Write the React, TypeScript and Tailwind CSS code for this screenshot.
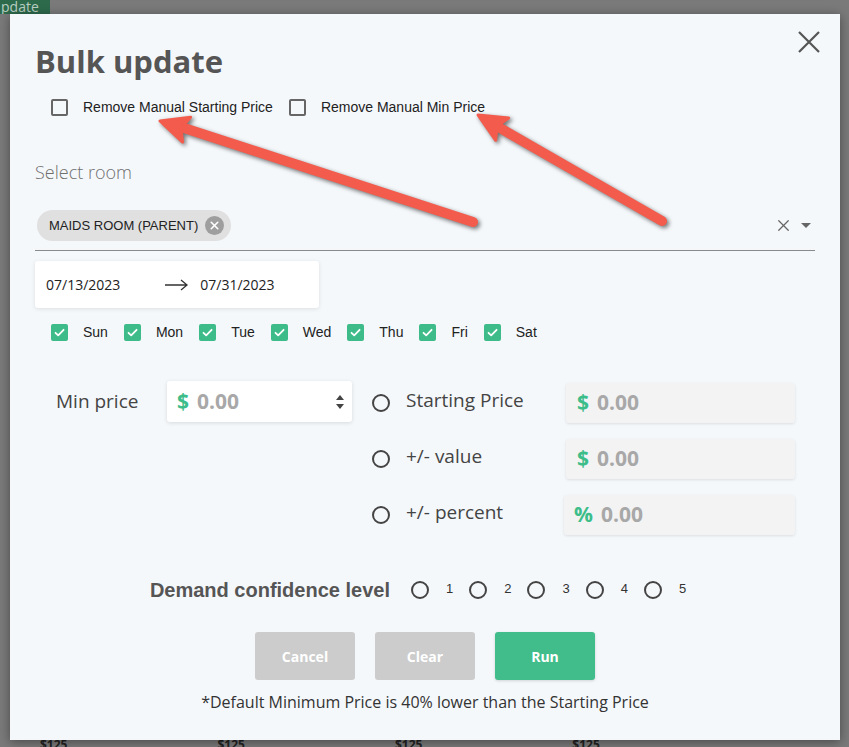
import { X } from "lucide-react";

const days = ["Sun", "Mon", "Tue", "Wed", "Thu", "Fri", "Sat"];

const priceRows = [
  { label: "Starting Price", sign: "$" },
  { label: "+/- value", sign: "$" },
  { label: "+/- percent", sign: "%" },
];

const Radio = () => (
  <span className="inline-block w-[18px] h-[18px] rounded-full border-2 border-[#444] shrink-0" />
);

const GreenCheck = () => (
  <span className="flex items-center justify-center w-[17px] h-[17px] rounded-[2px] bg-[#3dbb89] shrink-0">
    <svg width="13" height="13" viewBox="0 0 13 13" fill="none">
      <path d="M2.5 6.8 L5.2 9.4 L10.6 3.8" stroke="#fff" strokeWidth="1.8" strokeLinecap="round" strokeLinejoin="round" />
    </svg>
  </span>
);

const Arrows = () => (
  <svg
    className="absolute inset-0 pointer-events-none drop-shadow-[2px_2px_2px_rgba(0,0,0,0.55)]"
    width="849"
    height="747"
    viewBox="0 0 849 747"
  >
    <line x1="473" y1="222" x2="184" y2="128" stroke="#f35b4c" strokeWidth="10" strokeLinecap="round" />
    <polygon points="160,121 190.6,117.3 181,127.9 182.6,142.1" fill="#f35b4c" stroke="#f35b4c" strokeWidth="3" strokeLinejoin="round" />
    <line x1="662" y1="221" x2="500" y2="128" stroke="#f35b4c" strokeWidth="10" strokeLinecap="round" />
    <polygon points="478,115 508.7,117.9 497,126.1 495.7,140.3" fill="#f35b4c" stroke="#f35b4c" strokeWidth="3" strokeLinejoin="round" />
  </svg>
);

const App = () => {
  return (
    <div className="relative w-[849px] h-[747px] overflow-hidden bg-[#7a7a7a] font-['Open_Sans',sans-serif]">
      {/* page behind the overlay */}
      <div className="flex flex-col h-full">
        <div className="flex h-[14px]">
          <div className="w-[50px] bg-[#2d6a4c] text-[#b9cfc2] text-[14px] leading-[14px] pl-[1px] overflow-hidden">pdate</div>
        </div>
        <div className="flex-1" />
        <div className="flex gap-[150px] pl-[40px] h-[8px] text-[#222] text-[12px] leading-[12px] font-bold">
          <span>$125</span>
          <span>$125</span>
          <span>$125</span>
          <span>$125</span>
        </div>
      </div>

      {/* modal */}
      <div className="absolute left-[10px] top-[14px] w-[830px] h-[726px] bg-[#f5f8fb] shadow-[0_2px_10px_rgba(0,0,0,0.4)] px-[25px] pt-[27px]">
        <button className="absolute right-[19px] top-[16px] w-[24px] h-[24px] flex items-center justify-center">
          <svg width="24" height="24" viewBox="0 0 24 24" fill="none">
            <path d="M2 2 L22 22 M22 2 L2 22" stroke="#555" strokeWidth="2.2" />
          </svg>
        </button>

        <h2 className="text-[31px] leading-[40px] font-bold text-[#555]">Bulk update</h2>

        <div className="flex items-center h-[20px] mt-[16px] pl-[16px] font-['Liberation_Sans',Arial,sans-serif] text-[14px] text-[#222]">
          <span className="w-[17px] h-[17px] rounded-[2px] border-2 border-[#666]" />
          <span className="ml-[15px]">Remove Manual Starting Price</span>
          <span className="ml-[16px] w-[17px] h-[17px] rounded-[2px] border-2 border-[#666]" />
          <span className="ml-[15px]">Remove Manual Min Price</span>
        </div>

        <div className="mt-[43px] text-[18px] leading-[24px] font-light text-[#6f6f6f]">Select room</div>

        <div className="flex items-center mt-[26px] pl-[2px] pb-[9px] border-b border-[#8a8a8a]">
          <div className="flex items-center h-[31px] rounded-full bg-[#e0e0e0] pl-[12px] pr-[7px] font-['Liberation_Sans',Arial,sans-serif] text-[13px] text-[#222]">
            MAIDS ROOM (PARENT)
            <span className="ml-[7px] flex items-center justify-center w-[19px] h-[19px] rounded-full bg-[#9e9e9e]">
              <X size={13} strokeWidth={3} color="#fff" />
            </span>
          </div>
          <div className="flex-1" />
          <X size={19} strokeWidth={1.6} color="#666" />
          <svg className="ml-[8px] mr-[4px]" width="10" height="6" viewBox="0 0 10 6">
            <path d="M0 0 L10 0 L5 5 Z" fill="#666" />
          </svg>
        </div>

        <div className="flex items-center w-[284px] h-[47px] mt-[10px] bg-white rounded-[3px] shadow-[0_1px_4px_rgba(0,0,0,0.1)] pl-[11px] text-[14px] text-[#222]">
          <span>07/13/2023</span>
          <svg className="ml-[45px]" width="24" height="12" viewBox="0 0 24 12" fill="none">
            <path d="M0 6 H22 M16 1 L22 6 L16 11" stroke="#333" strokeWidth="1.3" />
          </svg>
          <span className="ml-[11px]">07/31/2023</span>
        </div>

        <div className="flex items-center mt-[14px] pl-[16px] font-['Liberation_Sans',Arial,sans-serif] text-[14px] text-[#222]">
          {days.map((d) => (
            <div key={d} className="flex items-center mr-[16px]">
              <GreenCheck />
              <span className="ml-[15px]">{d}</span>
            </div>
          ))}
        </div>

        <div className="flex mt-[38px] pl-[21px]">
          <div className="w-[111px] h-[41px] flex items-center text-[19px] text-[#444]">Min price</div>
          <div className="flex items-center w-[185px] h-[41px] bg-white rounded-[3px] shadow-[0_1px_4px_rgba(0,0,0,0.12)] pl-[10px] pr-[8px] text-[21px] font-bold">
            <span className="text-[#3cbd8a]">$</span>
            <span className="ml-[8px] text-[#a8a8a8]">0.00</span>
            <div className="flex-1" />
            <svg width="8" height="14" viewBox="0 0 8 14">
              <path d="M0 5 L4 0 L8 5 Z M0 9 L4 14 L8 9 Z" fill="#444" />
            </svg>
          </div>
          <div className="flex flex-col gap-[16px] ml-[20px] mt-[2px]">
            {priceRows.map((r, i) => (
              <div key={r.label} className="flex items-center">
                <Radio />
                <span
                  className={
                    i === 2
                      ? "ml-[16px] w-[158px] text-[19px] text-[#444] -mt-[6px]"
                      : "ml-[16px] w-[160px] text-[19px] text-[#444] -mt-[6px]"
                  }
                >
                  {r.label}
                </span>
                <div
                  className={
                    i === 2
                      ? "flex items-center w-[231px] h-[40px] bg-[#f3f3f3] rounded-[3px] shadow-[0_1px_3px_rgba(0,0,0,0.1)] pl-[10px] text-[21px] font-bold"
                      : "flex items-center w-[229px] h-[40px] bg-[#f3f3f3] rounded-[3px] shadow-[0_1px_3px_rgba(0,0,0,0.1)] pl-[11px] text-[21px] font-bold"
                  }
                >
                  <span className="text-[#3cbd8a]">{r.sign}</span>
                  <span className="ml-[8px] text-[#a8a8a8]">0.00</span>
                </div>
              </div>
            ))}
          </div>
        </div>

        <div className="flex items-center justify-center mt-[43px] h-[24px] pr-[14px] font-['Liberation_Sans',Arial,sans-serif]">
          <span className="text-[20px] font-bold text-[#555]">Demand confidence level</span>
          {[1, 2, 3, 4, 5].map((n, i) => (
            <div key={n} className={i === 0 ? "flex items-center ml-[21px]" : "flex items-center ml-[16px]"}>
              <Radio />
              <span className="ml-[17px] text-[13px] text-[#333] -mt-[2px]">{n}</span>
            </div>
          ))}
        </div>

        <div className="flex justify-center gap-[20px] mt-[30px]">
          <button className="w-[100px] h-[48px] rounded-[3px] bg-[#cccccc] text-white text-[14px] font-bold">Cancel</button>
          <button className="w-[100px] h-[48px] rounded-[3px] bg-[#cccccc] text-white text-[14px] font-bold">Clear</button>
          <button className="w-[100px] h-[48px] rounded-[3px] bg-[#41bd8b] text-white text-[14px] font-bold shadow-[0_1px_3px_rgba(0,0,0,0.15)]">Run</button>
        </div>

        <p className="mt-[11px] text-center text-[16px] leading-[22px] text-[#333]">
          *Default Minimum Price is 40% lower than the Starting Price
        </p>
      </div>

      <Arrows />
    </div>
  );
};

export default App;
